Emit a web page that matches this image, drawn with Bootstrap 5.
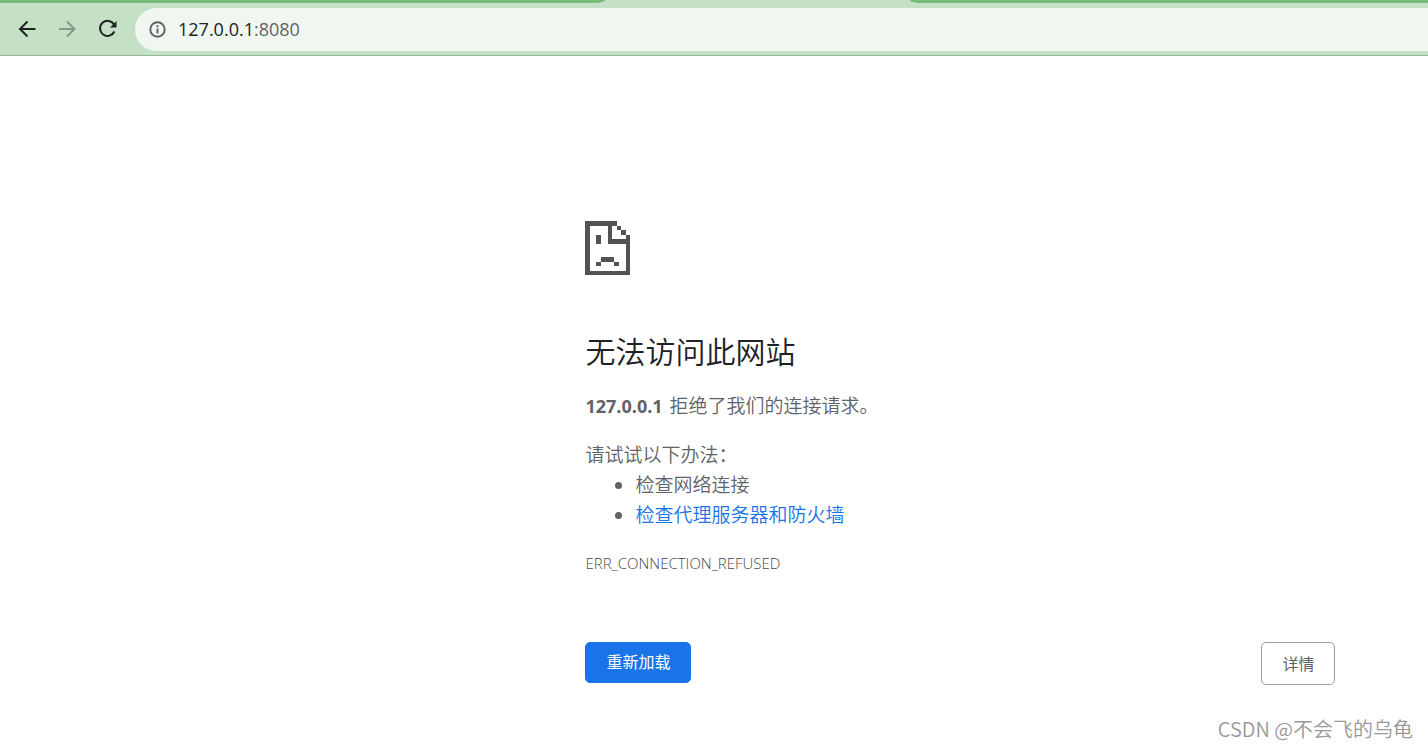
<!DOCTYPE html>
<html lang="zh-CN">
<head>
<meta charset="utf-8">
<meta name="viewport" content="width=device-width, initial-scale=1">
<title>127.0.0.1</title>
<link href="https://cdn.jsdelivr.net/npm/bootstrap@5.3.0/dist/css/bootstrap.min.css" rel="stylesheet">
<style>
  body { font-family: "Open Sans", "Noto Sans CJK SC", sans-serif; font-size: 19px; line-height: 30px; color: #5f6368; background: #fff; }
  .toolbar { background: #c5e1c5; border-bottom: 1px solid #97b79b; }
  .tab-strip { height: 3px; }
  .tab-rest { background: #77bb7a; }
  .tab-before { width: 605px; border-bottom-right-radius: 10px 3px; }
  .tab-active { width: 305px; }
  .tab-after { border-bottom-left-radius: 10px 3px; }
  .nav-row { padding: 5px 0 4px 15px; gap: 16px; }
  .tool-btn { width: 24px; height: 24px; color: #202124; margin-bottom: 2px; }
  .tool-btn:disabled { color: #84988a; opacity: 1; }
  .address { height: 43px; padding-left: 13px; gap: 11px; background: #f0f7f0; border-radius: 22px 0 0 22px; font-size: 18px; line-height: 26px; }
  .address-text { padding-bottom: 2px; }
  .host { color: #202124; }
  .error-page { max-width: 750px; margin-left: 41%; padding-top: 165px; }
  .error-title { font-size: 30px; line-height: 36px; font-weight: 350; color: #202124; margin: 59px 0 21px; }
  .message { font-weight: 350; }
  .message strong { font-size: 18px; font-weight: 700; margin-right: 2px; }
  .tips-block { margin-top: 19px; }
  .tips { padding-left: 50px; }
  .tips a { color: #1a73e8; }
  .error-code { font-size: 15px; line-height: 24px; font-weight: 300; color: #45494d; margin-top: 21px; }
  .actions { margin-top: 67px; }
  .act { font-size: 16px; line-height: 24px; padding: 8px 20px; border-radius: 5px; }
  .act-reload { background: #1a73e8; border-color: #1a73e8; color: #fff; padding: 7px 20px 8px; }
  .act-details { padding: 9px 20px 8px; border-color: #9aa0a6; color: #5f6368; }
  .watermark { right: 15px; bottom: 4px; font-family: "Noto Sans CJK SC", sans-serif; font-size: 20px; font-weight: 350; color: #999; }
</style>
</head>
<body class="min-vh-100 position-relative">
<header class="toolbar">
  <div class="tab-strip d-flex">
    <div class="tab-rest tab-before"></div>
    <div class="tab-active"></div>
    <div class="tab-rest tab-after flex-grow-1"></div>
  </div>
  <nav class="nav-row d-flex align-items-center">
    <button class="tool-btn btn border-0 p-0 d-flex" type="button" aria-label="后退">
      <svg width="24" height="24" viewBox="0 0 24 24" fill="none" stroke="currentColor" stroke-width="2"><path d="M20.500 12H5.500M12.500 4.500L5 12l7.500 7.500"/></svg>
    </button>
    <button class="tool-btn btn border-0 p-0 d-flex" type="button" aria-label="前进" disabled>
      <svg width="24" height="24" viewBox="0 0 24 24" fill="none" stroke="currentColor" stroke-width="2"><path d="M4 12h15M12 4.500L19.500 12l-7.500 7.500"/></svg>
    </button>
    <button class="tool-btn btn border-0 p-0 d-flex" type="button" aria-label="重新加载">
      <svg width="24" height="24" viewBox="0 0 24 24" fill="none" stroke="currentColor" stroke-width="2"><path d="M19 7.500A7.500 7.500 0 1 0 19.400 14.500"/><path d="M21.500 4v6.500H15z" fill="currentColor" stroke="none"/></svg>
    </button>
    <div class="address d-flex align-items-center flex-grow-1">
      <svg width="19" height="19" viewBox="0 0 19 19" fill="none" stroke="#5f6368" stroke-width="2"><circle cx="9.500" cy="9.500" r="7.200"/><path d="M9.500 8.500v5M9.500 5.300v2"/></svg>
      <span class="address-text"><span class="host">127.0.0.1</span>:8080</span>
    </div>
  </nav>
</header>
<main class="error-page">
  <svg class="d-block" width="45" height="54" viewBox="0 0 20 24" fill="#535353" shape-rendering="crispEdges" aria-hidden="true">
    <path d="M0 0H14V2H12V8H20V24H0zM2 2V22H18V10H10V2zM14 2h2v2h-2zM16 4h2v2h-2zM18 6h2v2h-2zM5 6h2v4H5zM7 16h6v2H7zM5 18h2v2H5zM13 18h2v2h-2z" fill-rule="evenodd"/>
  </svg>
  <h1 class="error-title">无法访问此网站</h1>
  <p class="message mb-0"><strong>127.0.0.1</strong> 拒绝了我们的连接请求。</p>
  <div class="message tips-block">
    <p class="mb-0">请试试以下办法：</p>
    <ul class="tips mb-0">
      <li>检查网络连接</li>
      <li><a class="text-decoration-none" href="#">检查代理服务器和防火墙</a></li>
    </ul>
  </div>
  <p class="error-code mb-0">ERR_CONNECTION_REFUSED</p>
  <div class="actions d-flex justify-content-between align-items-start">
    <button class="btn act act-reload" type="button">重新加载</button>
    <button class="btn act act-details" type="button">详情</button>
  </div>
</main>
<div class="watermark position-absolute">CSDN @不会飞的乌龟</div>
<script src="https://cdn.jsdelivr.net/npm/bootstrap@5.3.0/dist/js/bootstrap.bundle.min.js"></script>
</body>
</html>
